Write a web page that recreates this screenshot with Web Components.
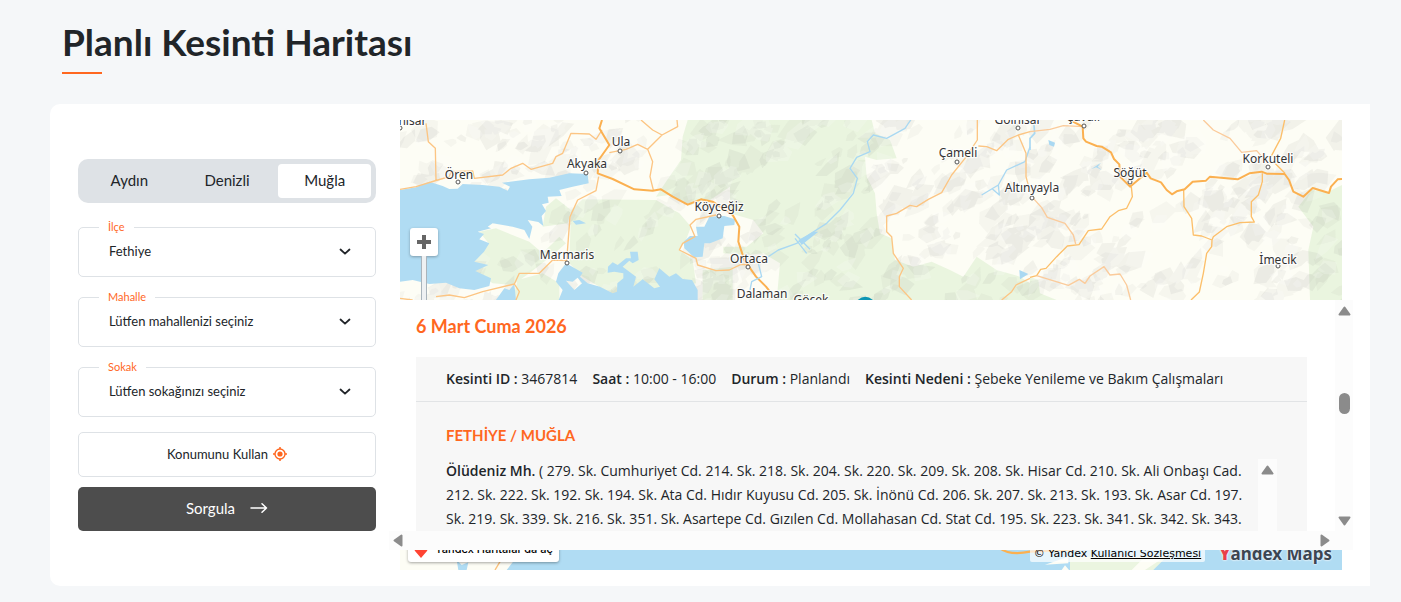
<!DOCTYPE html>
<html lang="tr">
<head>
<meta charset="utf-8">
<title>Planlı Kesinti Haritası</title>
<style>
body { margin: 0; background: #f5f7f9; color: #212529; font-family: Lato, "Liberation Sans", sans-serif; }
</style>
</head>
<body>
<outage-page></outage-page>

<template id="t-page">
<style>
:host { display: block; padding: 20px 31px 16px 50px; }
h1 { margin: 0 12px; font-size: 37px; line-height: 44px; font-weight: 700; }
h1::after { content: ""; display: block; width: 40px; height: 2px; margin-top: 8px; background: #ff671f; }
main { display: flex; gap: 24px; margin-top: 30px; padding: 16px 28px; background: #fff; border-radius: 10px 0 0 10px; box-sizing: border-box; }
outage-form { flex: 0 0 298px; padding-top: 39px; }
outage-map { flex: 1; min-width: 0; }
</style>
<h1>Planlı Kesinti Haritası</h1>
<main>
  <outage-form></outage-form>
  <outage-map><outage-panel></outage-panel></outage-map>
</main>
</template>

<template id="t-form">
<style>
:host { display: block; }
button { font: inherit; color: inherit; cursor: pointer; }
.tabs { display: grid; grid-template-columns: repeat(3, 1fr); gap: 5px; padding: 5px; height: 44px; box-sizing: border-box; background: #dee2e6; border-radius: 10px; margin-bottom: 24px; }
.tabs button { border: 0; padding: 0 0 2px; background: none; border-radius: 4px; font-size: 15px; }
.tabs button[aria-pressed=true] { background: #fff; }
form { display: flex; flex-direction: column; }
labelled-select { margin-bottom: 20px; }
labelled-select:last-of-type { margin-bottom: 15px; }
.locate, .submit { display: flex; align-items: center; justify-content: center; border-radius: 5px; box-sizing: border-box; height: 45px; padding: 0 0 2px; }
.locate { border: 1px solid #dee2e6; background: #fff; gap: 5px; font-size: 13px; margin-bottom: 10px; }
.submit { border: 0; height: 44px; background: #4d4d4d; color: #fff; gap: 15px; font-size: 15px; }
</style>
<div class="tabs">
  <button type="button" aria-pressed="false">Aydın</button>
  <button type="button" aria-pressed="false">Denizli</button>
  <button type="button" aria-pressed="true">Muğla</button>
</div>
<form>
  <labelled-select label="İlçe" value="Fethiye"></labelled-select>
  <labelled-select label="Mahalle" value="Lütfen mahallenizi seçiniz"></labelled-select>
  <labelled-select label="Sokak" value="Lütfen sokağınızı seçiniz"></labelled-select>
  <button type="button" class="locate">Konumunu Kullan
    <svg width="14" height="14" viewBox="0 0 14 14" fill="none" stroke="#ff671f"><circle cx="7" cy="7" r="5" stroke-width="1.4"/><circle cx="7" cy="7" r="2.6" fill="#ff671f" stroke="none"/><path d="M7 0v2M7 12v2M0 7h2M12 7h2" stroke-width="1.5"/></svg>
  </button>
  <button type="button" class="submit">Sorgula
    <svg width="18" height="12" viewBox="0 0 18 12" fill="none" stroke="#fff" stroke-width="1.5" stroke-linecap="round" stroke-linejoin="round"><path d="M1 6h15.500M12 1.700L16.500 6 12 10.300"/></svg>
  </button>
</form>
</template>

<template id="t-select">
<style>
:host { display: block; position: relative; }
label { position: absolute; left: 21px; top: -8px; padding: 0 9px; background: #fff; color: #ff671f; font-size: 11px; line-height: 16px; }
select { display: block; appearance: none; width: 100%; height: 50px; box-sizing: border-box; border: 1px solid #dee2e6; border-radius: 5px; background: #fff; color: inherit; font: inherit; font-size: 13px; padding: 0 48px 2px 30px; }
svg { position: absolute; right: 25px; top: 21px; pointer-events: none; }
</style>
<select id="s"><option></option></select>
<label for="s"></label>
<svg width="12" height="8" viewBox="0 0 12 8" fill="none" stroke="#212529" stroke-width="1.8" stroke-linecap="round" stroke-linejoin="round"><path d="M1.500 1.500L6 5.700l4.500-4.200"/></svg>
</template>

<template id="t-map">
<style>
:host { display: block; position: relative; height: 450px; }
.art { display: block; width: 100%; height: 100%; }
.art text { font-family: "Noto Sans", sans-serif; fill: #333; stroke: #fff; stroke-width: 7px; stroke-opacity: .8; paint-order: stroke; text-anchor: middle; stroke-linejoin: round; }
.zoom { position: absolute; left: 10px; top: 108px; width: 28px; height: 28px; padding: 0; border: 0; border-radius: 3px; background: #fff; box-shadow: 0 1px 3px rgba(0,0,0,.3); }
.zoom svg { display: block; margin: auto; }
.track { position: absolute; left: 21px; top: 136px; width: 4px; height: 70px; border: solid #a9b4bc; border-width: 0 1px; background: #eef1f3; }
.foot { position: absolute; left: 8px; right: 10px; bottom: 8px; display: flex; align-items: flex-end; font-family: "DejaVu Sans", sans-serif; font-size: 11px; color: #000; }
.open { display: flex; align-items: center; gap: 7px; height: 26px; padding: 2px 6px 0; background: #fff; border-radius: 3px; box-shadow: 0 1px 3px rgba(0,0,0,.35); color: #000; text-decoration: none; font-family: Inter, sans-serif; font-size: 11px; font-weight: 500; line-height: 26px; }
.copy { margin-left: auto; background: rgba(255,255,255,.7); padding: 0 4px; line-height: 16px; border-radius: 2px; font-size: 11px; }
.copy a { color: #000; }
.logo { margin-left: 14px; color: #3b4653; font: 700 17px/16px "Noto Sans", sans-serif; text-shadow: 0 0 2px #fff, 0 0 2px #fff; }
.logo b { color: #e8404b; }
slot { display: block; position: absolute; left: -11px; right: -11px; top: 180px; bottom: 20px; }
</style>
<svg class="art" viewBox="0 0 2826 1350" preserveAspectRatio="xMidYMid slice" role="img" aria-label="Harita">
  <rect width="2826" height="1350" fill="#fdfdf5"/>
  <g fill="#eaf5df">
    <g transform="translate(-12 -30)">
      <path d="M875 30L1427 30 1437 70 1482 90 1502 145 1442 150 1407 140 1412 200 1437 250 1442 310 1452 370 1487 385 1497 450 1552 470 1607 455 1662 480 1702 500 1742 440 1802 480 1872 500 1902 520 1902 570 1142 570 1152 460 1102 430 1052 435 982 430 982 410 1052 410 1102 370 1072 330 1002 310 1002 230 942 270 880 285 820 255 780 260 820 200 855 150 860 80Z"/>
      <path d="M560 268L780 270 850 310 885 350 870 390 850 420 890 450 900 520 800 540 660 560 560 500 520 460 525 300Z"/>
      <path d="M235 455L278 400 250 365 300 355 400 395 440 430 490 380 510 400 470 435 400 490 350 525 290 520 240 485ZM365 510L440 490 490 520 490 570 350 570ZM450 290L480 265 525 300 515 340 440 350ZM920 480L1010 470 1010 570 920 570Z"/>
    </g>
    <g transform="translate(1890 -30)"><path d="M936 225L895 245 845 240 805 290 850 350 835 420 840 570 936 570ZM0 500L25 510 30 550 80 570H0Z"/></g>
  </g>
  <g id="relief"></g>
  <g transform="translate(-12 -30)">
    <g fill="#b0dcf3">
      <path d="M12 240L60 232 100 215 140 228 160 237 185 236 200 222 260 225 310 230 335 242 342 230 318 218 400 208 460 203 520 190 575 192 578 220 530 230 490 240 497 258 455 260 458 278 438 283 450 303 437 318 442 348 427 336 395 330 409 350 400 387 385 360 350 350 290 340 275 350 285 355 245 365 264 372 250 388 280 400 264 425 235 455 277 465 238 483 285 505 280 528 235 540 190 535 150 518 100 522 50 510 12 515Z"/>
      <path d="M355 522L340 540 325 535 300 570H360ZM530 333L550 330 570 340 540 344Z"/>
      <path fill-rule="evenodd" d="M510 460L560 488 552 500 575 520 612 530 650 550 663 545 664 520 682 505 682 490 655 485 635 488 636 470 650 457 665 465 690 445 705 445 702 425 725 425 728 450 710 460 700 452 680 470 720 500 712 530 740 508 775 535 792 530 775 508 790 475 820 500 840 490 860 507 888 510 905 540 905 570 488 570 500 540 480 515 487 490ZM510 512L530 515 545 503 558 520 535 540Z"/>
      <path d="M863 395L882 378 905 378 900 350 925 350 940 320 985 318 1017 328 1015 345 985 348 980 385 942 400 925 400 920 440 895 442 865 415Z"/>
    </g>
    <g fill="none" stroke="#fcc583" stroke-width="4" stroke-linejoin="round">
      <path d="M90 40L97 95 118 115 120 210M12 238L60 230 115 213 160 200 165 185 230 183 235 205 320 195 345 175 380 160 405 178 470 160 480 140 500 130 525 70 580 72 600 88 618 60M735 30L770 60 798 75 845 50 843 30M798 75L755 118 725 103 690 118 640 128M755 118L770 155 762 200 772 240M12 565L50 570M120 560L160 555 205 563 260 545 355 522 370 490 430 490 470 450 512 452 522 320 545 270 600 242 608 200M355 522L370 545 360 570M960 315L900 328 882 345 897 380 860 400 850 420 900 445 905 465 960 482 1000 480 1035 463 1060 465"/>
    </g>
    <path d="M618 30L610 55 640 105 608 150 605 190 650 207 715 238 770 242 795 238 830 260 875 284 915 268 950 275 1010 315 1030 350 1027 395 1045 450 1080 500 1110 530 1122 545" fill="none" stroke="#fbb050" stroke-width="6" stroke-linejoin="round"/>
  </g>
  <g transform="translate(930 -30)">
    <g fill="none" stroke="#a9d8f2" stroke-width="4" stroke-linejoin="round">
      <path d="M602 30L585 55 530 85 490 75 472 95 480 125 440 142 420 175 442 205 430 250 390 300 350 340 300 372 260 400 205 420 175 440M255 372L300 418M145 460L155 500 125 515 120 540M255 385L290 430M960 110L945 155 890 180 865 225 815 255M845 235L868 255 865 225"/>
    </g>
    <path d="M265 390L310 365 325 365 275 405ZM928 480L955 492 930 508Z" fill="#a9d8f2"/>
    <g fill="none" stroke="#fcc583" stroke-width="4" stroke-linejoin="round">
      <path d="M802 30L802 90 765 145 725 195 695 248 655 268 620 290 600 286 560 310 530 318 530 365 545 380 550 430 580 475 568 500 568 530 605 570M805 108L830 110 860 122 895 88 925 75 960 65M925 75L948 130 948 200 960 245M960 505L918 525 905 545 875 570"/>
    </g>
    <circle cx="466" cy="589" r="29" fill="#0d96b4"/>
  </g>
  <g transform="translate(1890 -30)">
    <path d="M55 90L75 98 72 110 58 105ZM183 178L213 158 203 170 216 180 198 172Z" fill="#a9d8f2"/>
    <path d="M12 45L14 70 0 85V120" fill="none" stroke="#a9d8f2" stroke-width="5"/>
    <g fill="none" stroke="#fcbf6a" stroke-width="4" stroke-linejoin="round">
      <path d="M304 230L307 260 290 295 265 302 240 320 215 357 175 362 147 404 112 408 80 440 48 475 32 478 20 497 0 502M461 240L462 290 485 325 490 375 515 378 546 390 550 380 590 350 630 338 673 336 664 320 664 275 685 255 697 215 697 190M546 390L545 410 530 430 520 490 508 546 483 570M764 30L752 85 723 140M735 160L765 190"/>
    </g>
    <g fill="none" stroke="#fbcb9b" stroke-width="4" stroke-linejoin="round">
      <path d="M0 65L60 58 100 47 160 50M520 30L550 60 600 85 635 127 680 122 700 145M10 265L35 293 52 322 105 340 130 375 137 402M20 497L115 526 148 508 165 520 180 498 222 470 240 495 270 492 290 525 302 570"/>
    </g>
    <path d="M120 30L158 50 160 85 168 95 200 108 215 110 243 127 252 147 268 163 270 200 300 230 350 188 362 205 393 217 410 240 426 253 440 244 464 238 488 215 528 212 540 200 623 208 658 190 695 185 710 191 764 192 777 210 790 245 820 260 848 234 897 249 903 230 923 208 936 207" fill="none" stroke="#fbb050" stroke-width="6" stroke-linejoin="round"/>
  </g>
  <rect y="1200" width="2826" height="150" fill="#b0dcf3"/>
  <path d="M0 1280H380L345 1318 320 1350H0Z" fill="#fdfdf5"/>
  <path d="M170 1320l15 15 20-8-5 23h-25Z" fill="#b0dcf3"/>
  <path d="M300 1325l-15 25" stroke="#fbc07a" stroke-width="4"/>
  <path d="M2010 1310H2300L2260 1350H2010Z" fill="#ebf5e0"/>
  <path d="M1935 1334l70-24v20ZM1985 1350l10-14 12 14ZM2195 1350l30-30 70-10-60 40Z" fill="#fdfdf5"/>
  <path d="M1800 1285q30 22 90 10l150-8" fill="none" stroke="#fbb050" stroke-width="7"/>
  <g id="dots" fill="#fff" stroke="#555" stroke-width="3"></g>
  <g id="names" font-size="36"></g>
</svg>
<button class="zoom" type="button" aria-label="Yakınlaştır"><svg width="14" height="14" viewBox="0 0 14 14"><path d="M7 0v14M0 7h14" stroke="#666" stroke-width="4"/></svg></button>
<div class="track"></div>
<div class="foot">
  <a class="open" href="#"><svg width="14" height="18" viewBox="0 0 14 18"><path d="M7 18L1 11A7 7 0 1 1 13 11Z" fill="#f43"/><circle cx="7" cy="7" r="2.500" fill="#fff"/></svg>Yandex Haritalar’da aç</a>
  <span class="copy">© Yandex <a href="#">Kullanıcı Sözleşmesi</a></span>
  <span class="logo"><b>Y</b>andex Maps</span>
</div>
<slot></slot>
</template>

<template id="t-panel">
<style>
:host { display: grid; grid-template-columns: 1fr 18px; grid-template-rows: 1fr 19px; height: 100%; background: #fcfcfc; }
.view { background: #fff; overflow: hidden; min-height: 0; padding: 0 28px 0 27px; }
h2 { margin: 15px 0 19px; color: #ff671f; font-size: 18px; line-height: 23px; font-weight: 700; }
article { background: #f7f7f7; }
header { display: flex; gap: 15px; padding: 0 30px; line-height: 44px; border-bottom: 1px solid #e2e4e6; white-space: nowrap; }
header, p { font-family: "Open Sans", "Noto Sans", sans-serif; font-size: 14px; }
b { font-weight: 600; }
.body { padding: 21px 30px 20px; }
h3 { margin: 0 0 12px; color: #ff671f; font-size: 15px; line-height: 24px; font-weight: 700; }
.streets { display: flex; justify-content: space-between; height: 120px; }
p { margin: 0; line-height: 24px; white-space: nowrap; }
.bar { width: 19px; background: #fcfcfc; flex: none; }
.bar svg, .v svg { display: block; margin: 6px auto 0; }
.v { display: flex; flex-direction: column; align-items: center; }
.v svg:last-child { margin: auto auto 5px; }
.v i { width: 11px; height: 21px; margin-top: 77px; border-radius: 6px; background: #8b8b8b; }
.h { display: flex; justify-content: space-between; align-items: center; padding: 0 5px 0 4px; }
svg { fill: #8b8b8b; stroke: #8b8b8b; stroke-width: 2; stroke-linejoin: round; }
</style>
<div class="view">
  <h2>6 Mart Cuma 2026</h2>
  <article>
    <header>
      <span><b>Kesinti ID :</b> 3467814</span><span><b>Saat :</b> 10:00 - 16:00</span><span><b>Durum :</b> Planlandı</span><span><b>Kesinti Nedeni :</b> Şebeke Yenileme ve Bakım Çalışmaları</span>
    </header>
    <div class="body">
      <h3>FETHİYE / MUĞLA</h3>
      <div class="streets">
        <p><b>Ölüdeniz Mh.</b> ( 279. Sk. Cumhuriyet Cd. 214. Sk. 218. Sk. 204. Sk. 220. Sk. 209. Sk. 208. Sk. Hisar Cd. 210. Sk. Ali Onbaşı Cad.<br>212. Sk. 222. Sk. 192. Sk. 194. Sk. Ata Cd. Hıdır Kuyusu Cd. 205. Sk. İnönü Cd. 206. Sk. 207. Sk. 213. Sk. 193. Sk. Asar Cd. 197.<br>Sk. 219. Sk. 339. Sk. 216. Sk. 351. Sk. Asartepe Cd. Gızılen Cd. Mollahasan Cd. Stat Cd. 195. Sk. 223. Sk. 341. Sk. 342. Sk. 343.</p>
        <div class="bar"><svg width="13" height="10" viewBox="0 0 13 10"><path d="M6.500 1.500L11.500 8.500H1.500Z"/></svg></div>
      </div>
    </div>
  </article>
</div>
<div class="v">
  <svg width="13" height="10" viewBox="0 0 13 10"><path d="M6.500 1.500L11.500 8.500H1.500Z"/></svg>
  <i></i>
  <svg width="13" height="10" viewBox="0 0 13 10"><path d="M1.500 1.500H11.500L6.500 8.500Z"/></svg>
</div>
<div class="h">
  <svg width="10" height="13" viewBox="0 0 10 13"><path d="M1.500 6.500L8.500 1.500V11.500Z"/></svg>
  <svg width="10" height="13" viewBox="0 0 10 13"><path d="M1.500 1.500L8.500 6.500L1.500 11.500Z"/></svg>
</div>
</template>

<script>
class Base extends HTMLElement {
  constructor() {
    super();
    this.attachShadow({ mode: 'open' }).append(document.getElementById(this.constructor.tpl).content.cloneNode(true));
  }
}
class LabelledSelect extends Base {
  static tpl = 't-select';
  connectedCallback() {
    this.shadowRoot.querySelector('label').textContent = this.getAttribute('label');
    this.shadowRoot.querySelector('option').textContent = this.getAttribute('value');
  }
}
// Places: name, label centre x, baseline y, marker x, marker y (map pixels).
const PLACES = [
  ['anisar', 9, 5, 0, 8], ['Ören', 59, 59, 58, 62], ['Akyaka', 187, 48, 186, 53], ['Ula', 221, 26, 220, 31],
  ['Köyceğiz', 319, 91, 319, 96], ['Marmaris', 167, 139, 167, 143], ['Ortaca', 349, 143, 348, 147],
  ['Dalaman', 362, 178], ['Göcek', 411, 184], ['Çameli', 558, 37, 557, 42], ['Gölhisar', 618, 4, 618, 8],
  ['Altınyayla', 632, 72, 632, 78], ['Çavdır', 684, 1, 684, 6], ['Söğüt', 730, 57, 730, 62],
  ['Korkuteli', 868, 43, 868, 47], ['İmecik', 878, 144, 878, 146]
];
class OutageMap extends Base {
  static tpl = 't-map';
  connectedCallback() {
    const q = id => this.shadowRoot.getElementById(id);
    // Hill shading: irregular facets from a seeded generator, grouped along ridges that lean north-east.
    let s = 7;
    const r = () => (s = (s * 16807) % 2147483647) / 2147483647;
    const sets = ['', '', ''];
    for (let i = 0; i < 240; i++) {
      let x = r() * 2900 - 40, y = r() * 620;
      const lean = .3 + r() * 1.2;
      const n = 3 + r() * 5 | 0;
      for (let j = 0; j < n; j++) {
        const cx = x + (r() - .5) * 40, cy = y + (r() - .5) * 36, size = 16 + r() * 34, turn = r() * 6;
        let d = '';
        for (let k = 0; k < 5; k++) {
          const a = turn + k * 1.26, m = size * (.35 + r() * .8);
          const u = Math.cos(a) * m, v = Math.sin(a) * m * .8;
          d += (k ? 'L' : 'M') + (cx + u + v * .3 | 0) + ' ' + (cy + v - u * lean * .5 | 0);
        }
        sets[j % 3] += d + 'Z';
        x += 12 + r() * 12; y -= 13 * lean;
      }
    }
    q('relief').innerHTML =
      `<path d="${sets[0]}" fill="#6f7472" fill-opacity=".05"/><path d="${sets[1]}" fill="#6f7472" fill-opacity=".08"/><path d="${sets[2]}" fill="#fff" fill-opacity=".18"/>`;
    q('names').innerHTML = PLACES.map(p => `<text x="${p[1] * 3}" y="${p[2] * 3}">${p[0]}</text>`).join('');
    q('dots').innerHTML = PLACES.filter(p => p.length > 3).map(p => `<circle cx="${p[3] * 3}" cy="${p[4] * 3}" r="6"/>`).join('');
  }
}
customElements.define('labelled-select', LabelledSelect);
customElements.define('outage-form', class extends Base { static tpl = 't-form'; });
customElements.define('outage-panel', class extends Base { static tpl = 't-panel'; });
customElements.define('outage-map', OutageMap);
customElements.define('outage-page', class extends Base { static tpl = 't-page'; });
</script>
</body>
</html>
